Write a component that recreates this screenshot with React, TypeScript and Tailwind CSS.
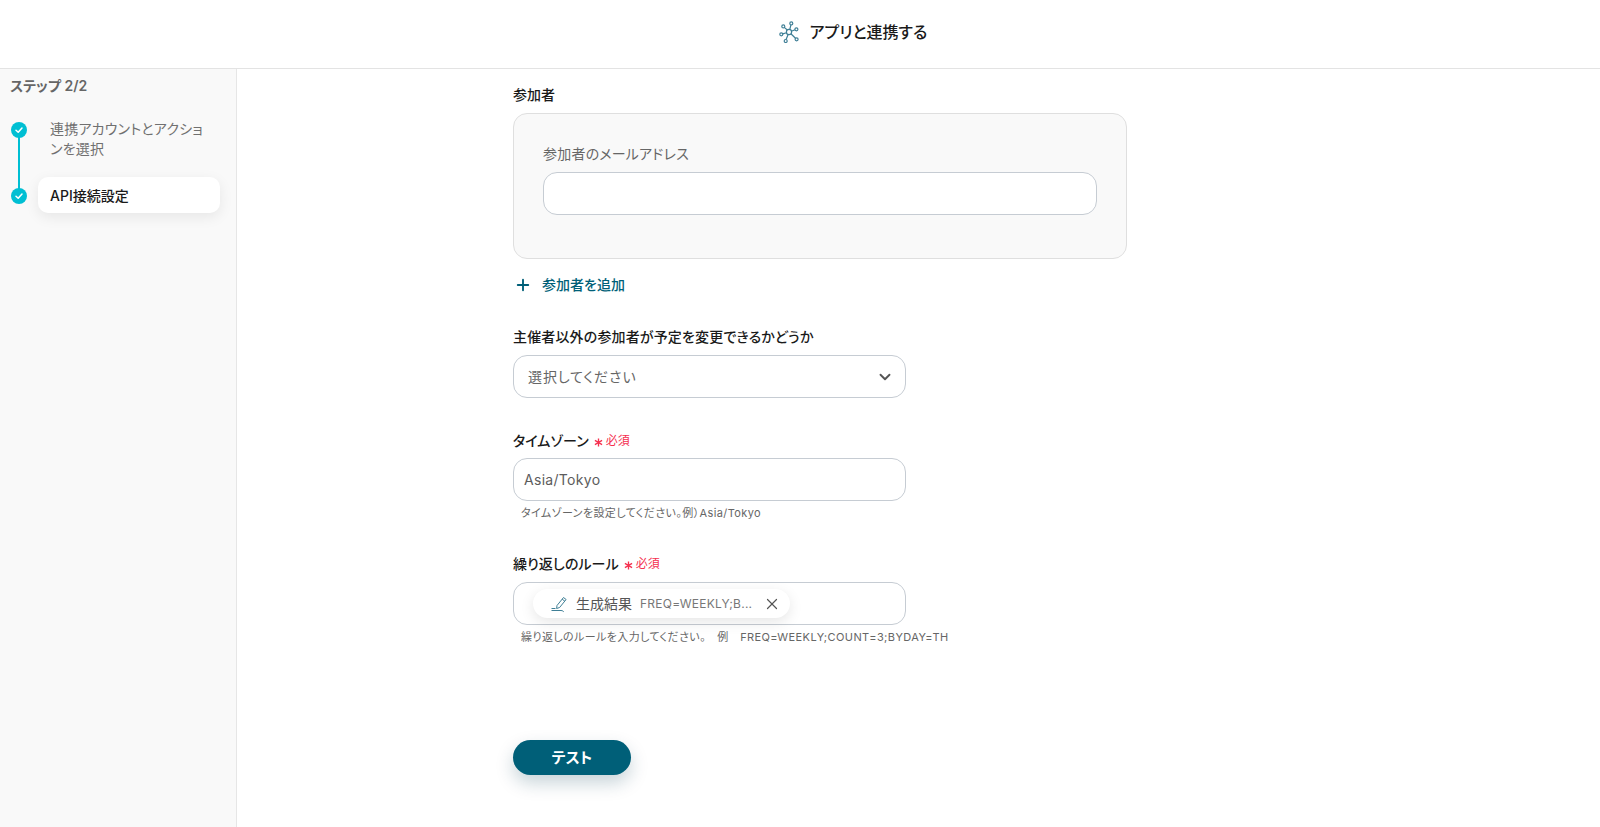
import { ChevronDown, Plus, X } from "lucide-react";

const font = "font-['Inter','Noto_Sans_CJK_JP',sans-serif] [font-feature-settings:'palt']";

function Required() {
  return (
    <span className="ml-[5px] mt-[2px] inline-flex items-center gap-[3px] text-[12px] font-normal tracking-normal text-[#f5304f]">
      <svg width="9" height="9" viewBox="0 0 10 10" className="mt-[2px]" fill="none" stroke="#f5304f" strokeWidth="1.5">
        <path d="M5 0.5v9M1 2.7l8 4.6M9 2.7L1 7.3" />
      </svg>
      必須
    </span>
  );
}

function NetworkIcon() {
  return (
    <svg width="22" height="22" viewBox="0 0 22 22" fill="none" stroke="#3f7f96" strokeWidth="1.2">
      <circle cx="10" cy="11" r="2.6" />
      <circle cx="12.3" cy="2.4" r="1.5" />
      <circle cx="17.4" cy="8.3" r="1.5" />
      <circle cx="17.6" cy="18.3" r="1.5" />
      <circle cx="6.7" cy="20" r="1.5" />
      <circle cx="2.3" cy="13.3" r="1.5" />
      <circle cx="4.3" cy="5.4" r="1.5" />
      <path d="M10.8 8.5l1.1-4.6M12.4 10.2l3.6-1.4M11.9 12.8l4.6 4.4M9.1 13.5l-2 5M7.5 11.7l-3.8 1.2M8.3 9l-3-2.6" />
    </svg>
  );
}

function StepDot() {
  return (
    <div className="flex h-4 w-4 items-center justify-center rounded-full bg-[#00bfd3]">
      <svg width="10" height="10" viewBox="0 0 10 10" fill="none" stroke="white" strokeWidth="1.5" strokeLinecap="round" strokeLinejoin="round">
        <path d="M2 5.2l2.2 2.1L8 3" />
      </svg>
    </div>
  );
}

export default function App() {
  return (
    <div className={`flex h-[827px] flex-col overflow-hidden bg-white text-[#1a1a1a] ${font}`}>
      <header className="flex h-[69px] shrink-0 items-center justify-center gap-[9px] border-b border-[#e3e3e3] pb-[5px] pl-[106px]">
        <NetworkIcon />
        <span className="text-[16px] font-medium">アプリと連携する</span>
      </header>

      <div className="flex flex-1">
        <aside className="w-[237px] shrink-0 border-r border-[#e6e6e6] bg-[#f9f9f9] pl-[10px] pr-4 pt-[8px]">
          <div className="text-[14px] font-semibold leading-[18px] text-[#666666]">ステップ 2/2</div>
          <div className="relative mt-[24px]">
            <div className="absolute left-[8px] top-[12px] h-[67px] w-[2px] bg-[#00bfd3]" />
            <div className="flex">
              <div className="relative left-[1px] mt-[3px]">
                <StepDot />
              </div>
              <div className="ml-[24px] w-[160px] text-[14px] leading-[20px] tracking-[0.2px] text-[#707070]">
                連携アカウントとアクションを選択
              </div>
            </div>
            <div className="mt-[18px] flex items-center">
              <div className="relative left-[1px] top-[1px]">
                <StepDot />
              </div>
              <div className="ml-[12px] flex h-[36px] w-[184px] items-center rounded-[10px] bg-white pl-[12px] text-[14px] font-medium shadow-[0_4px_14px_rgba(0,0,0,0.08)]">
                API接続設定
              </div>
            </div>
          </div>
        </aside>

        <main className="flex-1 pl-[276px] pt-[17px]">
          <div className="text-[14px] font-medium leading-[18px]">参加者</div>
          <div className="mt-[9px] h-[146px] w-[614px] rounded-[14px] border border-[#dfdfdf] bg-[#f9f9f9] pl-[29px] pt-[30px]">
            <div className="text-[14px] leading-[20px] tracking-[0.2px] text-[#666666]">参加者のメールアドレス</div>
            <div className="mt-[8px] h-[43px] w-[554px] rounded-[14px] border border-[#c6ccd3] bg-white" />
          </div>
          <div className="mt-[17px] flex h-[18px] items-center text-[14px] font-medium text-[#005f78]">
            <Plus size={18} strokeWidth={2.5} className="ml-[1px]" />
            <span className="ml-[10px] mb-[2px]">参加者を追加</span>
          </div>

          <div className="mt-[34px] text-[14px] font-medium leading-[18px] tracking-[0.15px]">主催者以外の参加者が予定を変更できるかどうか</div>
          <div className="mt-[9px] flex h-[43px] w-[393px] items-center justify-between rounded-[14px] border border-[#c6ccd3] pl-[14px] pr-[11px] text-[14px] tracking-[0.9px] text-[#666666]">
            <span>選択してください</span>
            <ChevronDown size={18} strokeWidth={2.5} className="text-[#555555]" />
          </div>

          <div className="mt-[33px] flex h-[18px] items-center text-[14px] font-medium">
            タイムゾーン
            <Required />
          </div>
          <div className="mt-[9px] flex h-[43px] w-[393px] items-center rounded-[14px] border border-[#c6ccd3] pl-[10px] text-[14px] tracking-[0.3px] text-[#5c5c5c]">
            Asia/Tokyo
          </div>
          <div className="mt-[4px] pl-[8px] text-[11px] leading-[16px] tracking-[0.4px] text-[#666666]">
            タイムゾーンを設定してください。例）Asia/Tokyo
          </div>

          <div className="mt-[33px] flex h-[18px] items-center text-[14px] font-medium tracking-[0.1px]">
            繰り返しのルール
            <Required />
          </div>
          <div className="mt-[10px] flex h-[43px] w-[393px] items-center rounded-[14px] border border-[#c6ccd3] pl-[19px]">
            <div className="flex h-[29px] w-[257px] items-center rounded-full bg-white pl-[17px] shadow-[0_4px_14px_rgba(0,0,0,0.1)]">
              <svg width="18" height="18" viewBox="0 0 18 18" fill="none" stroke="#3f7f96" strokeWidth="1">
                <path d="M7 10.5l6.5-8 2.6 2-6.5 8-3 1z" />
                <path d="M12.2 4.2l2.6 2" />
                <path d="M5.5 13.5H1.5M1.5 15.5h9.5c1.8 0 2.5 1 2.8 1.5" />
              </svg>
              <span className="ml-[8px] text-[14px] text-[#555555]">生成結果</span>
              <span className="ml-[8px] w-[113px] whitespace-nowrap text-[12px] tracking-[0.25px] text-[#777777]">FREQ=WEEKLY;B...</span>
              <X size={18} strokeWidth={1.6} className="ml-[10px] text-[#555555]" />
            </div>
          </div>
          <div className="mt-[4px] whitespace-pre pl-[8px] text-[11px] leading-[16px] tracking-[0.4px] text-[#666666]">
            繰り返しのルールを入力してください。　例　FREQ=WEEKLY;COUNT=3;BYDAY=TH
          </div>

          <button className="mt-[95px] flex h-[35px] w-[118px] items-center justify-center rounded-full bg-[#005f78] pt-[1px] text-[15px] font-bold text-white shadow-[0_8px_18px_rgba(0,60,80,0.22)]">
            テスト
          </button>
        </main>
      </div>
    </div>
  );
}
